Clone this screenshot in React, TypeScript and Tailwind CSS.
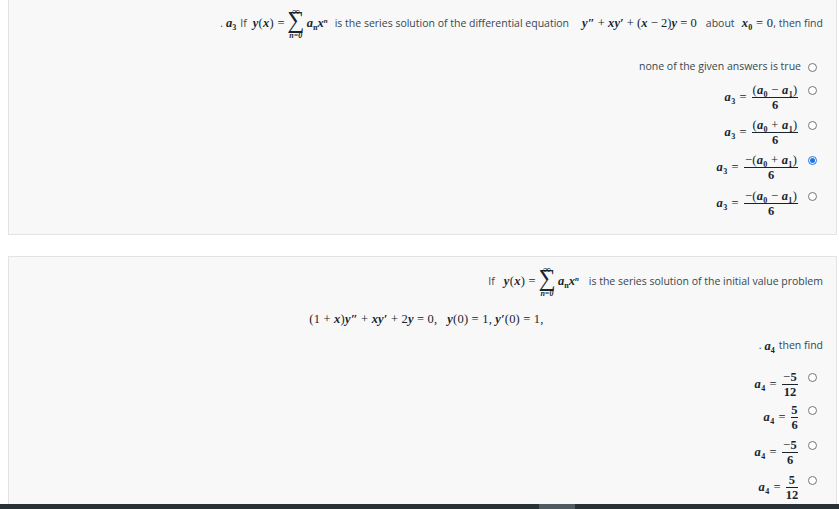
import React from "react";

const ink = "text-[#17242e]";
const serif = "font-['Liberation_Serif',serif]";

function I({ children }: { children: React.ReactNode }) {
  return <span className={`${serif} italic font-bold ${ink}`}>{children}</span>;
}
function R({ children }: { children: React.ReactNode }) {
  return <span className={`${serif} ${ink}`}>{children}</span>;
}
function Sub({ children }: { children: React.ReactNode }) {
  return (
    <span className={`${serif} relative top-[3px] text-[8px] font-bold leading-none ${ink}`}>{children}</span>
  );
}
function A({ n }: { n: string }) {
  return (
    <span className="whitespace-nowrap">
      <I>a</I>
      <Sub>{n}</Sub>
    </span>
  );
}

function Sum() {
  return (
    <span className={`${serif} inline-flex flex-col items-center w-[16px] ${ink} font-bold`}>
      <span className="text-[11px] leading-[8px] h-[8px] tracking-normal">∞</span>
      <span className="relative -top-[3px] text-[24px] leading-[16px] h-[16px] font-normal tracking-normal">∑</span>
      <span className="text-[8px] leading-[8px] h-[8px] mt-[1px] italic tracking-normal">n=0</span>
    </span>
  );
}

function YSum() {
  return (
    <span className="inline-flex items-center gap-[3px] text-[12.5px] tracking-[0.3px] whitespace-nowrap">
      <span>
        <I>y</I>
        <R>(</R>
        <I>x</I>
        <R>{") ="}</R>
      </span>
      <Sum />
      <span className="tracking-normal">
        <A n="n" />
        <I>x</I>
        <span className={`${serif} relative -top-[4px] italic font-bold text-[7px] leading-none ${ink}`}>n</span>
      </span>
    </span>
  );
}

function Radio({ on }: { on?: boolean }) {
  return on ? (
    <span className="block w-[9px] h-[9px] rounded-full border border-[#1a73e8] bg-white p-px">
      <span className="block w-[5px] h-[5px] rounded-full bg-[#1a73e8]" />
    </span>
  ) : (
    <span className="block w-[9px] h-[9px] rounded-full border border-[#767676] bg-white" />
  );
}

function Frac({ sym, num, den, w }: { sym: string; num: React.ReactNode; den: string; w: string }) {
  return (
    <span className="inline-flex items-start text-[12.5px]">
      <span className="mt-[5px] mr-[5px] whitespace-nowrap tracking-[0.5px]">
        <A n={sym} />
        <R>{" ="}</R>
      </span>
      <span className={`inline-flex flex-col items-center ${w}`}>
        <span className="h-[14px] leading-[14px] whitespace-nowrap tracking-[0.3px]">{num}</span>
        <span className="h-px w-full bg-[#17242e]" />
        <span className={`${serif} h-[14px] leading-[15px] font-bold ${ink}`}>{den}</span>
      </span>
    </span>
  );
}

function Option({ children, on, h }: { children: React.ReactNode; on?: boolean; h: string }) {
  return (
    <div className={`flex justify-end items-start gap-[10px] pr-[6px] ${h}`}>
      {children}
      <span className="mt-[3px]">
        <Radio on={on} />
      </span>
    </div>
  );
}

const plus = (
  <>
    <R>(</R>
    <A n="0" />
    <R>{" + "}</R>
    <A n="1" />
    <R>)</R>
  </>
);
const minus = (
  <>
    <R>(</R>
    <A n="0" />
    <R>{" − "}</R>
    <A n="1" />
    <R>)</R>
  </>
);
const B = ({ t }: { t: string }) => <span className={`${serif} font-bold ${ink}`}>{t}</span>;

const card = "bg-[#f8f8f8] border border-[#e3e3e3] pr-[13px] flex flex-col shrink-0";

export default function App() {
  return (
    <div className="h-[509px] w-[839px] overflow-hidden bg-white flex flex-col font-['Open_Sans',sans-serif] text-[10.5px] text-[#37474f]">
      <div className="flex-1 min-h-0 overflow-hidden pl-2 pr-[2px] flex flex-col gap-[21px]">
        <section className={`${card} h-[235px] border-t-0`}>
          <div className="h-[46px] flex justify-end items-center whitespace-nowrap">
            <span className="mt-[2px]">.</span>
            <span className="ml-[3px] text-[12.5px]">
              <A n="3" />
            </span>
            <span className="ml-[4px] mt-[2px]">If</span>
            <span className="ml-[6px]">
              <YSum />
            </span>
            <span className="ml-[7px] mt-[2px]">is the series solution of the differential equation</span>
            <span className="ml-[13px] text-[12.5px] tracking-[0.05px] whitespace-pre">
              <I>y″</I>
              <R>{" + "}</R>
              <I>xy′</I>
              <R>{" + ("}</R>
              <I>x</I>
              <R>{" − 2)"}</R>
              <I>y</I>
              <R>{" = 0"}</R>
            </span>
            <span className="ml-[9px] mt-[2px]">about</span>
            <span className="ml-[7px] text-[12.5px] tracking-[0.3px] whitespace-pre">
              <I>x</I>
              <Sub>0</Sub>
              <R>{" = 0"}</R>
            </span>
            <span className="mt-[2px]">, then find</span>
          </div>
          <div className="mt-[14px] mb-[9px] h-[14px] flex justify-end items-center gap-[7px] pr-[6px]">
            <span>none of the given answers is true</span>
            <Radio />
          </div>
          <Option h="h-[35px]">
            <Frac sym="3" num={minus} den="6" w="w-[46px]" />
          </Option>
          <Option h="h-[35px]">
            <Frac sym="3" num={plus} den="6" w="w-[46px]" />
          </Option>
          <Option h="h-[36px]" on>
            <Frac sym="3" num={<><R>−</R>{plus}</>} den="6" w="w-[54px]" />
          </Option>
          <Option h="h-[35px]">
            <Frac sym="3" num={<><R>−</R>{minus}</>} den="6" w="w-[54px]" />
          </Option>
        </section>

        <section className={`${card} h-[270px]`}>
          <div className="mt-[8px] h-[32px] flex justify-end items-center whitespace-nowrap">
            <span className="mt-[2px]">If</span>
            <span className="ml-[9px]">
              <YSum />
            </span>
            <span className="ml-[10px] mt-[2px]">is the series solution of the initial value problem</span>
          </div>
          <div className="mt-[14px] h-[16px] flex justify-center pl-[21px] text-[12.5px] tracking-[0.2px] leading-[16px] whitespace-pre">
            <R>{"(1 + "}</R>
            <I>x</I>
            <R>)</R>
            <I>y″</I>
            <R>{" + "}</R>
            <I>xy′</I>
            <R>{" + 2"}</R>
            <I>y</I>
            <R>{" = 0,   "}</R>
            <I>y</I>
            <R>{"(0) = 1, "}</R>
            <I>y′</I>
            <R>{"(0) = 1,"}</R>
          </div>
          <div className="mt-[12px] h-[14px] flex justify-end items-center whitespace-nowrap">
            <span>.</span>
            <span className="ml-[3px] text-[12.5px]">
              <A n="4" />
            </span>
            <span className="ml-[4px]">then find</span>
          </div>
          <div className="h-[17px]" />
          <Option h="h-[33px]">
            <Frac sym="4" num={<><R>−</R><B t="5" /></>} den="12" w="w-[16px]" />
          </Option>
          <Option h="h-[35px]">
            <Frac sym="4" num={<B t="5" />} den="6" w="w-[7px]" />
          </Option>
          <Option h="h-[35px]">
            <Frac sym="4" num={<><R>−</R><B t="5" /></>} den="6" w="w-[16px]" />
          </Option>
          <Option h="h-[35px]">
            <Frac sym="4" num={<B t="5" />} den="12" w="w-[12px]" />
          </Option>
        </section>
      </div>
      <div className="h-[5px] bg-[#263238] flex shrink-0">
        <span className="ml-[539px] w-[36px] bg-[#4f5b62]" />
      </div>
    </div>
  );
}
